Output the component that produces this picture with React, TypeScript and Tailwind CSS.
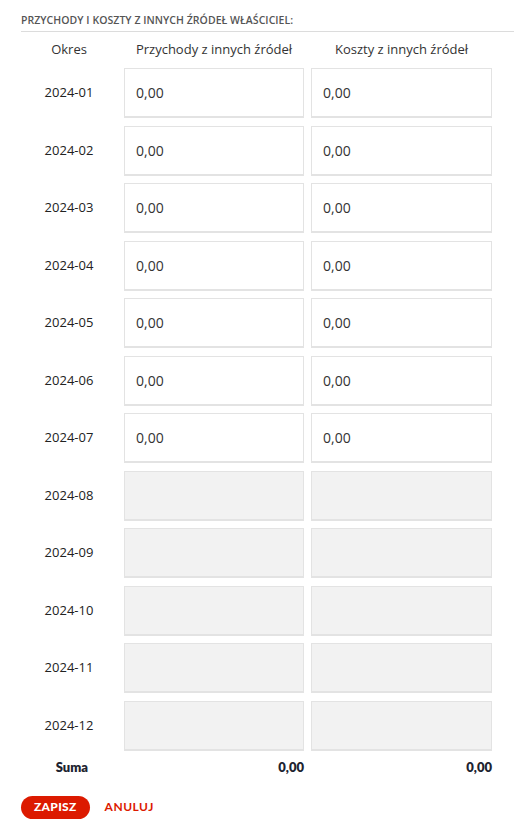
import React from 'react';

const months = ['01', '02', '03', '04', '05', '06', '07', '08', '09', '10', '11', '12'];
const filled = 7;

function Cell({ value, disabled }: { value?: string; disabled?: boolean }) {
    return (
        <div
            className={`h-[50px] border border-b-2 border-[#e3e3e3] flex items-center px-[11px] text-[14px] text-[#333] ${
                disabled ? 'bg-[#f2f2f2]' : 'bg-white'
            }`}
        >
            {value}
        </div>
    );
}

export default function App() {
    return (
        <div className="w-[514px] min-h-[839px] bg-white pl-[21px] pt-[13px] font-['Open_Sans',sans-serif] text-[#333]">
            {/* Section title */}
            <div className="border-b border-[#dcdcdc] pb-[4px] text-[10.5px] font-semibold tracking-[0.05px] text-[#555] uppercase leading-[14px]">
                Przychody i koszty z innych źródeł właściciel:
            </div>

            <div className="pr-[22px]">
                {/* Column headers */}
                <div className="grid grid-cols-[96px_180px_181px] gap-x-[7px] h-[36px] items-center text-[13px] text-[#333]">
                    <div className="text-center">Okres</div>
                    <div className="text-center">Przychody z innych źródeł</div>
                    <div className="text-center">Koszty z innych źródeł</div>
                </div>

                {/* Rows */}
                <div className="flex flex-col gap-[7.5px]">
                    {months.map((m, i) => {
                        const active = i < filled;
                        return (
                            <div key={m} className="grid grid-cols-[96px_180px_181px] gap-x-[7px] items-center">
                                <div className="text-center text-[13px] text-[#222]">2024-{m}</div>
                                <Cell value={active ? '0,00' : undefined} disabled={!active} />
                                <Cell value={active ? '0,00' : undefined} disabled={!active} />
                            </div>
                        );
                    })}
                </div>

                {/* Sum */}
                <div className="grid grid-cols-[96px_180px_181px] gap-x-[7px] h-[34px] items-center font-['Lato',sans-serif] font-extrabold text-[13px] text-[#1d2330]">
                    <div className="text-right pr-[29px]">Suma</div>
                    <div className="text-right">0,00</div>
                    <div className="text-right">0,00</div>
                </div>
            </div>

            {/* Actions */}
            <div className="flex items-center gap-[15px] mt-[11px]">
                <button className="h-[23px] px-[13px] rounded-full bg-[#dc1a00] text-white text-[12px] font-['Lato',sans-serif] font-black tracking-[0.3px]">
                    ZAPISZ
                </button>
                <button className="text-[#dc1a00] text-[12px] font-['Lato',sans-serif] font-bold tracking-[0.5px]">
                    ANULUJ
                </button>
            </div>
        </div>
    );
}
